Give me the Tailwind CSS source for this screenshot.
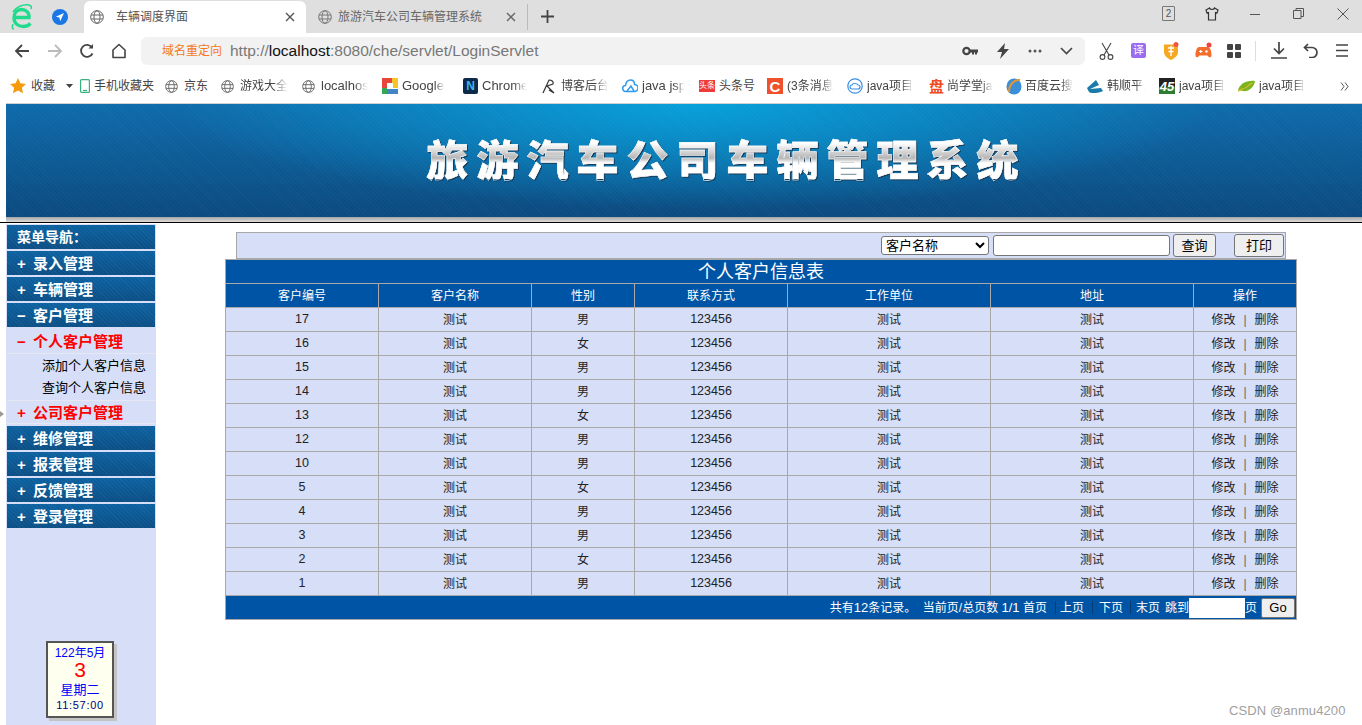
<!DOCTYPE html>
<html lang="zh-CN">
<head>
<meta charset="UTF-8">
<title>车辆调度界面</title>
<script src="https://cdn.jsdelivr.net/npm/@tailwindcss/browser@4"></script>
</head>
<body class="bg-white font-['Liberation_Sans','Noto_Sans_CJK_SC',sans-serif] text-xs text-black">
<div class="relative h-[725px] w-[1362px] overflow-hidden">

  <!-- tab bar -->
  <div class="flex h-[33px] items-end bg-[#dfdfdf]">
    <div class="flex h-[33px] w-[84px] shrink-0 items-center">
      <svg class="ml-[10px] h-[26px] w-[24px]" viewBox="0 0 24 26" fill="none"><path d="M4 13.500h15c.5-5-3-8-7.500-8S4 9 4 14s4 8.500 9 8.500c3 0 5.500-1 7.500-3" stroke="#1fdc8c" stroke-width="3.400"/><path d="M3 8C6 3 13 0 19 1c2 .5 3 2 2 4M3 20c-1 3-1 5 1 5" stroke="#1fdc8c" stroke-width="1.500"/></svg>
      <svg class="ml-[18px] h-4 w-4" viewBox="0 0 16 16"><circle cx="8" cy="8" r="8" fill="#1a78e6"/><path d="M12 4 3.800 7.800l3.600.8.800 3.600z" fill="#fff"/></svg>
    </div>
    <div class="flex h-8 w-[222px] shrink-0 items-center rounded-t-md bg-white pl-[6px] text-[#555]">
      <svg class="h-[14px] w-[14px]" viewBox="0 0 14 14" fill="none" stroke="#666"><circle cx="7" cy="7" r="6.300"/><ellipse cx="7" cy="7" rx="3" ry="6.300"/><path d="M1 5h12M1 9h12"/></svg>
      <span class="ml-[12px] w-[169px] leading-none">车辆调度界面</span>
      <svg class="h-[10px] w-[10px]" viewBox="0 0 10 10" stroke="#555" stroke-width="1.400"><path d="m1 1 8 8M9 1l-8 8"/></svg>
    </div>
    <div class="flex h-8 w-[222px] shrink-0 items-center pl-[12px] text-[#666]">
      <svg class="h-[14px] w-[14px]" viewBox="0 0 14 14" fill="none" stroke="#777"><circle cx="7" cy="7" r="6.300"/><ellipse cx="7" cy="7" rx="3" ry="6.300"/><path d="M1 5h12M1 9h12"/></svg>
      <span class="ml-[6px] w-[168px] shrink-0 leading-none">旅游汽车公司车辆管理系统</span>
      <svg class="h-[10px] w-[10px] shrink-0" viewBox="0 0 10 10" stroke="#666" stroke-width="1.400"><path d="m1 1 8 8M9 1l-8 8"/></svg>
      <span class="ml-[11px] h-[26px] w-px shrink-0 bg-[#bbb]"></span>
    </div>
    <div class="flex h-[33px] items-center">
      <svg class="ml-[13px] h-[13px] w-[13px]" viewBox="0 0 13 13" stroke="#444" stroke-width="1.800"><path d="M6.500 0v13M0 6.500h13"/></svg>
    </div>
    <div class="ml-auto flex h-[33px] items-center pb-[6px]">
      <span class="flex h-[15px] w-[13px] items-center justify-center rounded-[1px] border border-[#777] text-[10px] leading-none text-[#555]">2</span>
      <svg class="ml-[30px] h-[14px] w-[14px]" viewBox="0 0 14 14" fill="none" stroke="#333" stroke-width="1.200"><path d="M4.500 1 1 3l1 3 1.500-.5V13h7V5.500L12 6l1-3-3.500-2C9 3 5 3 4.500 1z"/></svg>
      <svg class="ml-[31px] h-[10px] w-[10px]" viewBox="0 0 10 10" stroke="#555"><path d="M0 5.500h10"/></svg>
      <svg class="ml-[33px] h-[11px] w-[11px]" viewBox="0 0 11 11" fill="none" stroke="#555"><path d="M.5 2.500h7.500v8H.5zM3 2.500V.5h7.500v8H8"/></svg>
      <svg class="ml-[33px] mr-[13px] h-[12px] w-[12px]" viewBox="0 0 12 12" stroke="#555"><path d="m.5.500 11 11M11.500.500l-11 11"/></svg>
    </div>
  </div>

  <!-- toolbar -->
  <div class="flex h-[33px] items-center bg-white pt-[2px]">
    <div class="flex w-[141px] shrink-0 items-center pl-[14px]">
      <svg class="h-4 w-4" viewBox="0 0 16 16" fill="none" stroke="#444" stroke-width="1.800"><path d="M15 8H2M8 2 2 8l6 6"/></svg>
      <svg class="ml-[17px] h-4 w-4" viewBox="0 0 16 16" fill="none" stroke="#bbb" stroke-width="1.800"><path d="M1 8h13M8 2l6 6-6 6"/></svg>
      <svg class="ml-[16px] h-4 w-4" viewBox="0 0 16 16" fill="none" stroke="#444" stroke-width="1.800"><path d="M13.500 10.500A6 6 0 1 1 13 4.500"/><path d="M14 1v4.500H9.500" fill="#444" stroke="none"/></svg>
      <svg class="ml-[16px] h-4 w-4" viewBox="0 0 16 16" fill="none" stroke="#444" stroke-width="1.600"><path d="M2 14.500V7l6-5.500L14 7v7.500z" stroke-linejoin="round"/></svg>
    </div>
    <div class="mt-px flex h-7 w-[944px] shrink-0 items-center rounded-md bg-[#f2f2f2] pl-[21px]">
      <span class="w-[68px] shrink-0 text-[#f47a20]">域名重定向</span>
      <span class="text-[15.500px] text-[#777]">http://<span class="text-[#111]">localhost</span>:8080/che/servlet/LoginServlet</span>
      <div class="ml-auto flex items-center pr-[12px]">
        <svg class="h-[12px] w-[16px]" viewBox="0 0 16 12"><circle cx="4.500" cy="6" r="3.200" fill="none" stroke="#444" stroke-width="2.200"/><path d="M8 4.500h8v3h-1v2h-2v-2h-1v2h-2v-2H8z" fill="#444"/></svg>
        <svg class="ml-[19px] h-[16px] w-[12px]" viewBox="0 0 12 16"><path d="M8 0 0 9h5l-2 7 9-10H7z" fill="#444"/></svg>
        <svg class="ml-[19px] h-[4px] w-[14px]" viewBox="0 0 14 4" fill="#555"><circle cx="2" cy="2" r="1.500"/><circle cx="7" cy="2" r="1.500"/><circle cx="12" cy="2" r="1.500"/></svg>
        <svg class="ml-[18px] h-[8px] w-[13px]" viewBox="0 0 13 8" fill="none" stroke="#444" stroke-width="1.600"><path d="m1 1 5.500 5.500L12 1"/></svg>
      </div>
    </div>
    <div class="flex flex-1 items-center pl-[14px]">
      <svg class="h-[18px] w-[15px]" viewBox="0 0 15 18" fill="none" stroke="#444" stroke-width="1.100"><path d="M3 1l7 12M12 1 5 13"/><circle cx="3.500" cy="15" r="2.400"/><circle cx="11.500" cy="15" r="2.400"/></svg>
      <span class="ml-[17px] flex h-[15px] w-[15px] items-center justify-center rounded-[2px] bg-[#9b6cf0] text-[11px] leading-none text-white">译</span>
      <svg class="ml-[17px] h-[18px] w-[16px]" viewBox="0 0 16 18"><path d="M1 2.500h14V10c0 4-4 6.500-7 8-3-1.500-7-4-7-8z" fill="#f7a823"/><path d="M5 6h6M8 4v10M5.500 9.500h5" stroke="#fff" stroke-width="1.400"/><circle cx="13" cy="2.500" r="2.500" fill="#f0574a"/></svg>
      <svg class="ml-[16px] h-[18px] w-[17px]" viewBox="0 0 17 18"><path d="M4 5h9c2 0 3.500 4 3.500 8 0 3-2.500 3-4 .5H4.500C3 16 .5 16 .5 13 .5 9 2 5 4 5z" fill="#f36d2c"/><path d="M4 9.500h3.500M5.700 8v3" stroke="#fff" stroke-width="1.200"/><circle cx="11.500" cy="9.500" r="1.200" fill="#fff"/><circle cx="14" cy="3" r="2.500" fill="#ef4444"/></svg>
      <svg class="ml-[15px] h-[14px] w-[14px]" viewBox="0 0 14 14" fill="#444"><rect width="6" height="6" rx="1"/><rect x="8" width="6" height="6" rx="1"/><rect y="8" width="6" height="6" rx="1"/><rect x="8" y="8" width="6" height="6" rx="1"/></svg>
      <span class="ml-[14px] h-5 w-px bg-[#ddd]"></span>
      <svg class="ml-[15px] h-[17px] w-[16px]" viewBox="0 0 16 17" fill="none" stroke="#444" stroke-width="1.700"><path d="M8 0v11M3 6.500l5 5 5-5M0 16h16"/></svg>
      <svg class="ml-[16px] h-[15px] w-[15px]" viewBox="0 0 15 15" fill="none" stroke="#444" stroke-width="1.700"><path d="M5 1 1.500 4.500 5 8M2 4.500h7a5 5 0 0 1 0 10H6"/></svg>
      <svg class="ml-[18px] h-[13px] w-[12px]" viewBox="0 0 12 13" stroke="#444" stroke-width="1.700"><path d="M0 1h12M0 6.500h12M0 12h12"/></svg>
    </div>
  </div>

  <!-- bookmarks -->
  <div class="flex h-[37px] items-center bg-white pt-[3px] text-[#444]">
    <svg class="ml-[10px] h-4 w-4 shrink-0" viewBox="0 0 16 16"><path d="m8 0 2.400 5.200 5.600.7-4.100 3.800 1.100 5.600L8 12.500l-5 2.800 1.100-5.600L0 5.900l5.600-.7z" fill="#f59a0c"/></svg>
    <span class="ml-[5px] w-[35px] shrink-0">收藏</span>
    <svg class="h-[4px] w-[7px] shrink-0" viewBox="0 0 7 4"><path d="M0 0h7L3.500 4z" fill="#444"/></svg>
    <svg class="ml-[7px] h-[14px] w-[10px] shrink-0" viewBox="0 0 10 14" fill="none" stroke="#36b37e" stroke-width="1.200"><rect x=".6" y=".6" width="8.800" height="12.800" rx="1"/><path d="M3 11.500h4"/></svg>
    <span class="ml-[4px] w-[71px] shrink-0">手机收藏夹</span>
    <svg class="h-[13px] w-[13px] shrink-0" viewBox="0 0 14 14" fill="none" stroke="#666"><circle cx="7" cy="7" r="6.300"/><ellipse cx="7" cy="7" rx="3" ry="6.300"/><path d="M1 5h12M1 9h12"/></svg>
    <span class="ml-[6px] w-[37px] shrink-0">京东</span>
    <svg class="h-[13px] w-[13px] shrink-0" viewBox="0 0 14 14" fill="none" stroke="#666"><circle cx="7" cy="7" r="6.300"/><ellipse cx="7" cy="7" rx="3" ry="6.300"/><path d="M1 5h12M1 9h12"/></svg>
    <span class="ml-[6px] w-[48px] shrink-0 whitespace-nowrap [mask-image:linear-gradient(90deg,#000_70%,transparent)]">游戏大全</span>
    <svg class="ml-[14px] h-[13px] w-[13px] shrink-0" viewBox="0 0 14 14" fill="none" stroke="#666"><circle cx="7" cy="7" r="6.300"/><ellipse cx="7" cy="7" rx="3" ry="6.300"/><path d="M1 5h12M1 9h12"/></svg>
    <span class="ml-[6px] w-[47px] shrink-0 whitespace-nowrap text-[13px] [mask-image:linear-gradient(90deg,#000_70%,transparent)]">localhos</span>
    <svg class="ml-[14px] h-4 w-4 shrink-0" viewBox="0 0 16 16"><rect width="16" height="16" fill="#fff"/><path d="M0 0h10v5H5v5H0z" fill="#e8453c"/><path d="M10 0h6v10h-5V5h-1z" fill="#f7c325"/><path d="M0 10h5v6H0z" fill="#34a853"/><path d="M5 11h11v5H5z" fill="#4285c4"/></svg>
    <span class="ml-[4px] w-[43px] shrink-0 whitespace-nowrap text-[13px] [mask-image:linear-gradient(90deg,#000_75%,transparent)]">Google</span>
    <span class="ml-[18px] flex h-4 w-[15px] shrink-0 items-center justify-center rounded-[2px] bg-[#0d2a4a] text-[12px] font-bold leading-none text-[#39b6f2]">N</span>
    <span class="ml-[4px] w-[45px] shrink-0 whitespace-nowrap text-[13px] [mask-image:linear-gradient(90deg,#000_70%,transparent)]">Chrome</span>
    <svg class="ml-[15px] h-[15px] w-[14px] shrink-0" viewBox="0 0 14 15" fill="none" stroke="#333" stroke-width="1.200"><path d="M1 14 7 1c3 0 5 2 4 4L5 7l7 7-5-3"/></svg>
    <span class="ml-[5px] w-[47px] shrink-0 whitespace-nowrap [mask-image:linear-gradient(90deg,#000_75%,transparent)]">博客后台</span>
    <svg class="ml-[14px] h-[14px] w-4 shrink-0" viewBox="0 0 16 14" fill="none" stroke="#2f9bf0" stroke-width="1.500"><path d="M4 12.500a3 3 0 0 1-.5-6C4 3 6 1 8.500 1c2.500 0 4 2 4 4.500a3.500 3.500 0 0 1 0 7zM5 12l4-5 3 5"/></svg>
    <span class="ml-[4px] w-[43px] shrink-0 whitespace-nowrap text-[13px] [mask-image:linear-gradient(90deg,#000_75%,transparent)]">java jsp</span>
    <span class="ml-[14px] flex h-[12px] w-4 shrink-0 items-center justify-center bg-[#ee3b3b] text-[8px] leading-none text-white">头条</span>
    <span class="ml-[4px] w-[48px] shrink-0">头条号</span>
    <span class="flex h-4 w-4 shrink-0 items-center justify-center bg-[#f0512d] text-[15px] font-bold leading-none text-white">C</span>
    <span class="ml-[4px] w-[46px] shrink-0 whitespace-nowrap [mask-image:linear-gradient(90deg,#000_75%,transparent)]">(3条消息</span>
    <svg class="ml-[14px] h-4 w-4 shrink-0" viewBox="0 0 16 16" fill="none" stroke="#3a8ee6" stroke-width="1.200"><circle cx="8" cy="8" r="7.200"/><path d="M5 11a2 2 0 0 1 0-4c.5-2 5-2 6 0a2 2 0 0 1 0 4z"/></svg>
    <span class="ml-[4px] w-[46px] shrink-0 whitespace-nowrap [mask-image:linear-gradient(90deg,#000_75%,transparent)]">java项目</span>
    <span class="ml-[16px] w-4 shrink-0 text-[15px] font-bold leading-none text-[#f04a23]">盘</span>
    <span class="ml-[2px] w-[46px] shrink-0 whitespace-nowrap [mask-image:linear-gradient(90deg,#000_75%,transparent)]">尚学堂ja</span>
    <svg class="ml-[13px] h-[17px] w-4 shrink-0" viewBox="0 0 16 17"><ellipse cx="8" cy="8.500" rx="7.500" ry="8" fill="#3a8fd8"/><path d="M3 14C3 7 8 1 14 2" fill="none" stroke="#e8962c" stroke-width="2"/></svg>
    <span class="ml-[3px] w-[48px] shrink-0 whitespace-nowrap [mask-image:linear-gradient(90deg,#000_75%,transparent)]">百度云搜</span>
    <svg class="ml-[14px] h-[13px] w-4 shrink-0" viewBox="0 0 16 13"><path d="M0 8 9 0l3 5-9 4 11-1 2 3c-4 2-11 3-14 1z" fill="#1a7bab"/></svg>
    <span class="ml-[4px] w-[38px] shrink-0 whitespace-nowrap [mask-image:linear-gradient(90deg,#000_75%,transparent)]">韩顺平.</span>
    <span class="ml-[14px] flex h-4 w-4 shrink-0 items-center justify-center bg-[linear-gradient(#222_55%,#2d7d32_55%)] text-[13px] font-bold italic leading-none text-white">45</span>
    <span class="ml-[4px] w-[46px] shrink-0 whitespace-nowrap [mask-image:linear-gradient(90deg,#000_75%,transparent)]">java项目</span>
    <svg class="ml-[13px] h-[12px] w-[17px] shrink-0" viewBox="0 0 17 12"><path d="M0 10C2 4 8 0 17 1c-1 6-6 11-12 10z" fill="#7ab51d"/><path d="M0 11C3 10 9 7 14 3" stroke="#d8c22a" stroke-width="1.500"/></svg>
    <span class="ml-[4px] w-[46px] shrink-0 whitespace-nowrap [mask-image:linear-gradient(90deg,#000_75%,transparent)]">java项目</span>
    <svg class="ml-[35px] h-[9px] w-[9px] shrink-0" viewBox="0 0 9 9" fill="none" stroke="#555"><path d="m1 .5 3 4-3 4M5 .5l3 4-3 4"/></svg>
  </div>

  <!-- page -->
  <div class="flex h-[622px] flex-col">
    <div class="ml-[6px] flex h-[114px] shrink-0 items-center justify-center border-t border-[#d0d0d0] bg-[repeating-linear-gradient(45deg,rgba(255,255,255,.025)_0_1px,transparent_1px_3px),radial-gradient(ellipse_520px_105px_at_690px_0,#07a0da_0%,rgba(7,160,218,0)_100%),linear-gradient(#0f6bab,#0b4a7f)]">
      <span class="mb-[5px] ml-[85px] bg-[linear-gradient(#fff_15%,#b5b5b5_50%,#fff_62%,#fff)] bg-clip-text font-['Noto_Sans_CJK_SC',sans-serif] text-[42px] font-black leading-none tracking-[8px] text-transparent drop-shadow-[1px_1px_0_#1c3c58] [-webkit-text-stroke:0.5px_#fff]">旅游汽车公司车辆管理系统</span>
    </div>
    <div class="ml-[6px] h-[5px] shrink-0 bg-[linear-gradient(#a5a5a5,#dcdcdc)]"></div>
    <div class="h-px shrink-0 bg-black"></div>
    <div class="h-px shrink-0 bg-white"></div>

    <div class="flex min-h-0 flex-1">
      <!-- sidebar -->
      <aside class="ml-[6px] flex w-[150px] shrink-0 flex-col bg-[#d6dff7] px-px text-[15px] font-bold leading-none text-white">
        <div class="mt-px flex h-6 items-center bg-[repeating-linear-gradient(45deg,rgba(255,255,255,.04)_0_1px,transparent_1px_3px),linear-gradient(#0c62a1,#0c4f86)] pl-[10px] text-[14px]">菜单导航：</div>
        <div class="mt-[2px] flex h-6 items-center bg-[repeating-linear-gradient(45deg,rgba(255,255,255,.04)_0_1px,transparent_1px_3px),linear-gradient(#0c62a1,#0c4f86)] pl-[10px]"><span class="w-4">+</span>录入管理</div>
        <div class="mt-[2px] flex h-6 items-center bg-[repeating-linear-gradient(45deg,rgba(255,255,255,.04)_0_1px,transparent_1px_3px),linear-gradient(#0c62a1,#0c4f86)] pl-[10px]"><span class="w-4">+</span>车辆管理</div>
        <div class="mt-[2px] flex h-6 items-center bg-[repeating-linear-gradient(45deg,rgba(255,255,255,.04)_0_1px,transparent_1px_3px),linear-gradient(#0c62a1,#0c4f86)] pl-[10px]"><span class="w-4">−</span>客户管理</div>
        <div class="mt-[2px] flex h-[25px] items-center border-b border-[#e6e9f3] pl-[10px] text-[#f00]"><span class="w-4">−</span>个人客户管理</div>
        <div class="flex h-[22px] items-center pl-[35px] text-[13px] font-normal text-black">添加个人客户信息</div>
        <div class="flex h-[22px] items-center pl-[35px] text-[13px] font-normal text-black">查询个人客户信息</div>
        <div class="mt-[2px] flex h-6 items-center border-y border-[#e6e9f3] pl-[10px] text-[#f00]"><span class="w-4">+</span>公司客户管理</div>
        <div class="mt-[2px] flex h-6 items-center bg-[repeating-linear-gradient(45deg,rgba(255,255,255,.04)_0_1px,transparent_1px_3px),linear-gradient(#0c62a1,#0c4f86)] pl-[10px]"><span class="w-4">+</span>维修管理</div>
        <div class="mt-[2px] flex h-6 items-center bg-[repeating-linear-gradient(45deg,rgba(255,255,255,.04)_0_1px,transparent_1px_3px),linear-gradient(#0c62a1,#0c4f86)] pl-[10px]"><span class="w-4">+</span>报表管理</div>
        <div class="mt-[2px] flex h-6 items-center bg-[repeating-linear-gradient(45deg,rgba(255,255,255,.04)_0_1px,transparent_1px_3px),linear-gradient(#0c62a1,#0c4f86)] pl-[10px]"><span class="w-4">+</span>反馈管理</div>
        <div class="mt-[2px] flex h-6 items-center bg-[repeating-linear-gradient(45deg,rgba(255,255,255,.04)_0_1px,transparent_1px_3px),linear-gradient(#0c62a1,#0c4f86)] pl-[10px]"><span class="w-4">+</span>登录管理</div>
        <!-- calendar -->
        <div class="mb-[7px] ml-[39px] mt-auto flex h-[77px] w-[68px] flex-col items-center border-2 border-[#555] bg-[#ffffef] font-normal text-[#00f] shadow-[3px_3px_0_#c4c4c4]">
          <span class="mt-[3px] text-[12px] leading-[14px]">122年5月</span>
          <span class="text-[21px] leading-[20px] text-[#f00]">3</span>
          <span class="mt-[2px] text-[13px] leading-[16px]">星期二</span>
          <span class="text-[11px] leading-[14px] tracking-[.7px] text-[#000080]">11:57:00</span>
        </div>
      </aside>

      <!-- main -->
      <main class="flex-1 pl-[69px] pt-2">
        <div class="ml-[11px] flex h-[27px] w-[1050px] items-center border border-[#a8a8a8] bg-[#d6dff7] text-[13px]">
          <select class="ml-[644px] h-[19px] w-[108px] rounded-[3px] border border-[#767676] bg-white text-[13px] leading-none"><option>客户名称</option></select>
          <input class="ml-1 h-[21px] w-[177px] rounded-[3px] border border-[#767676] bg-white" type="text">
          <button class="ml-[3px] h-[23px] w-[43px] rounded-[3px] border border-[#767676] bg-[#efefef]">查询</button>
          <button class="ml-[18px] h-[23px] w-[50px] rounded-[3px] border border-[#767676] bg-[#efefef]">打印</button>
        </div>
        <table class="w-[1071px] table-fixed border-collapse border border-[#a8a8a8] bg-[#d6dff7] text-center text-[12px] text-[#222]">
          <colgroup><col class="w-[153px]"><col class="w-[153px]"><col class="w-[103px]"><col class="w-[153px]"><col class="w-[203px]"><col class="w-[203px]"><col class="w-[103px]"></colgroup>
          <thead class="bg-[#0054a6] text-white">
            <tr class="h-6"><th colspan="7" class="border border-[#a8a8a8] p-0 text-[18px] font-normal leading-none">个人客户信息表</th></tr>
            <tr class="h-6">
              <th class="border border-[#a8a8a8] p-0 font-normal">客户编号</th>
              <th class="border border-[#a8a8a8] p-0 font-normal">客户名称</th>
              <th class="border border-[#a8a8a8] p-0 font-normal">性别</th>
              <th class="border border-[#a8a8a8] p-0 font-normal">联系方式</th>
              <th class="border border-[#a8a8a8] p-0 font-normal">工作单位</th>
              <th class="border border-[#a8a8a8] p-0 font-normal">地址</th>
              <th class="border border-[#a8a8a8] p-0 font-normal">操作</th>
            </tr>
          </thead>
          <tbody class="[&_td]:border [&_td]:border-[#a8a8a8] [&_td]:p-0 [&_td:nth-child(1)]:text-[12.500px] [&_td:nth-child(4)]:text-[12.500px] [&_tr]:h-6">
            <tr><td>17</td><td>测试</td><td>男</td><td>123456</td><td>测试</td><td>测试</td><td>修改<span class="mx-[8px] text-[#666]">|</span>删除</td></tr>
            <tr><td>16</td><td>测试</td><td>女</td><td>123456</td><td>测试</td><td>测试</td><td>修改<span class="mx-[8px] text-[#666]">|</span>删除</td></tr>
            <tr><td>15</td><td>测试</td><td>男</td><td>123456</td><td>测试</td><td>测试</td><td>修改<span class="mx-[8px] text-[#666]">|</span>删除</td></tr>
            <tr><td>14</td><td>测试</td><td>男</td><td>123456</td><td>测试</td><td>测试</td><td>修改<span class="mx-[8px] text-[#666]">|</span>删除</td></tr>
            <tr><td>13</td><td>测试</td><td>女</td><td>123456</td><td>测试</td><td>测试</td><td>修改<span class="mx-[8px] text-[#666]">|</span>删除</td></tr>
            <tr><td>12</td><td>测试</td><td>男</td><td>123456</td><td>测试</td><td>测试</td><td>修改<span class="mx-[8px] text-[#666]">|</span>删除</td></tr>
            <tr><td>10</td><td>测试</td><td>男</td><td>123456</td><td>测试</td><td>测试</td><td>修改<span class="mx-[8px] text-[#666]">|</span>删除</td></tr>
            <tr><td>5</td><td>测试</td><td>女</td><td>123456</td><td>测试</td><td>测试</td><td>修改<span class="mx-[8px] text-[#666]">|</span>删除</td></tr>
            <tr><td>4</td><td>测试</td><td>男</td><td>123456</td><td>测试</td><td>测试</td><td>修改<span class="mx-[8px] text-[#666]">|</span>删除</td></tr>
            <tr><td>3</td><td>测试</td><td>男</td><td>123456</td><td>测试</td><td>测试</td><td>修改<span class="mx-[8px] text-[#666]">|</span>删除</td></tr>
            <tr><td>2</td><td>测试</td><td>女</td><td>123456</td><td>测试</td><td>测试</td><td>修改<span class="mx-[8px] text-[#666]">|</span>删除</td></tr>
            <tr><td>1</td><td>测试</td><td>男</td><td>123456</td><td>测试</td><td>测试</td><td>修改<span class="mx-[8px] text-[#666]">|</span>删除</td></tr>
          </tbody>
          <tfoot>
            <tr class="h-6 bg-[#0054a6] text-white">
              <td colspan="7" class="border border-[#a8a8a8] p-0">
                <div class="flex items-center justify-end pr-px">
                  <span>共有<span class="text-[13px]">12</span>条记录。&nbsp;&nbsp;当前页/总页数 <span class="text-[13px]">1/1</span> 首页</span>
                  <span class="ml-[8px] h-[13px] w-px bg-[#0a3a70]"></span>
                  <span class="ml-[4px]">上页</span>
                  <span class="ml-[8px] h-[13px] w-px bg-[#0a3a70]"></span>
                  <span class="ml-[6px]">下页</span>
                  <span class="ml-[7px] h-[13px] w-px bg-[#0a3a70]"></span>
                  <span class="ml-[5px]">末页</span>
                  <span class="ml-[5px]">跳到</span>
                  <input class="h-5 w-[56px] bg-white" type="text">
                  <span>页</span>
                  <button class="ml-[4px] h-5 w-[34px] rounded-[2px] border border-[#767676] bg-[#efefef] text-[13px] leading-none text-black">Go</button>
                </div>
              </td>
            </tr>
          </tfoot>
        </table>
      </main>
    </div>
  </div>

  <!-- overlays -->
  <svg class="absolute left-0 top-[411px] h-[6px] w-1" viewBox="0 0 4 6"><path d="M0 0l4 3-4 3z" fill="#999"/></svg>
  <span class="absolute left-[1229px] top-[702px] text-[13px] tracking-[.1px] text-[#a0a0a0]">CSDN @anmu4200</span>
</div>
</body>
</html>
